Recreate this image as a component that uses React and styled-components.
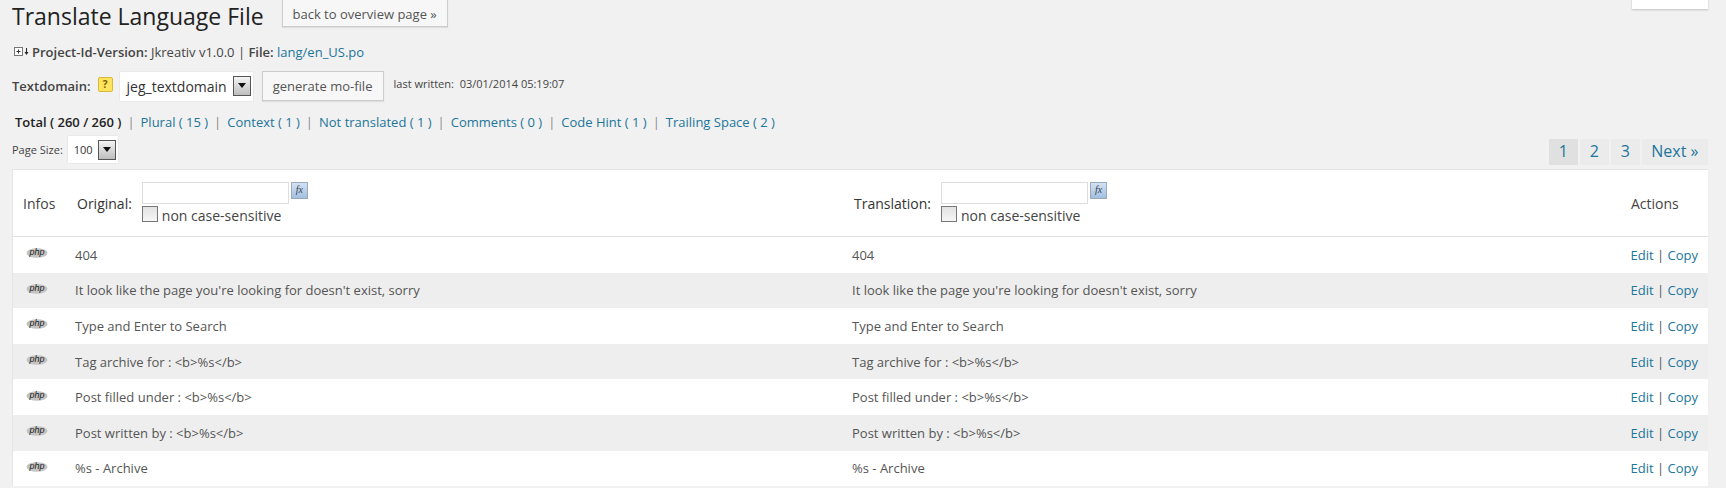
import styled, { createGlobalStyle } from "styled-components";

const GlobalStyle = createGlobalStyle`
	html, body {
		margin: 0;
		padding: 0;
		height: 488px;
		overflow: hidden;
		background: #f1f1f1;
		font-family: "Open Sans", sans-serif;
		font-size: 13px;
		color: #444;
	}
`;

const linkColor = "#21759b";

const rows = [
	"404",
	"It look like the page you're looking for doesn't exist, sorry",
	"Type and Enter to Search",
	"Tag archive for : <b>%s</b>",
	"Post filled under : <b>%s</b>",
	"Post written by : <b>%s</b>",
	"%s - Archive",
];

const filters = [
	"Plural ( 15 )",
	"Context ( 1 )",
	"Not translated ( 1 )",
	"Comments ( 0 )",
	"Code Hint ( 1 )",
	"Trailing Space ( 2 )",
];

export default function App() {
	return (
		<Page>
			<GlobalStyle />
			<ScreenTab />
			<TitleRow>
				<Title>Translate Language File</Title>
				<BackButton>back to overview page »</BackButton>
			</TitleRow>

			<ProjectRow>
				<ExpandIcon />
				<b>Project-Id-Version:</b>&nbsp;Jkreativ v1.0.0&nbsp;|&nbsp;<b>File:</b>&nbsp;
				<Link>lang/en_US.po</Link>
			</ProjectRow>

			<DomainRow>
				<b>Textdomain:</b>
				<HelpIcon>?</HelpIcon>
				<DomainSelect>
					jeg_textdomain
					<SelectArrow />
				</DomainSelect>
				<GenerateButton>generate mo-file</GenerateButton>
				<LastWritten>last written:&nbsp; 03/01/2014 05:19:07</LastWritten>
			</DomainRow>

			<FilterRow>
				<b>Total ( 260 / 260 )</b>
				{filters.map((label) => (
					<span key={label}>
						<Sep>|</Sep>
						<Link>{label}</Link>
					</span>
				))}
			</FilterRow>

			<PagerRow>
				<PageSize>
					Page Size:
					<SizeSelect>
						100
						<SelectArrow />
					</SizeSelect>
				</PageSize>
				<Pager>
					<PageLink $current>1</PageLink>
					<PageLink>2</PageLink>
					<PageLink>3</PageLink>
					<PageLink>Next »</PageLink>
				</Pager>
			</PagerRow>

			<TableBox>
				<HeadRow>
					<HeadLabel>Infos</HeadLabel>
					<SearchCell>
						<span>Original:</span>
						<SearchBox />
					</SearchCell>
					<SearchCell>
						<span>Translation:</span>
						<SearchBox />
					</SearchCell>
					<ActionsHead>Actions</ActionsHead>
				</HeadRow>
				{rows.map((text, i) => (
					<Row key={text} $odd={i % 2 === 1}>
						<InfoCell>
							<PhpIcon />
						</InfoCell>
						<TextCell>{text}</TextCell>
						<TextCell>{text}</TextCell>
						<ActionCell>
							<Link>Edit</Link> | <Link>Copy</Link>
						</ActionCell>
					</Row>
				))}
			</TableBox>
		</Page>
	);
}

function SearchBox() {
	return (
		<SearchStack>
			<SearchTop>
				<SearchInput />
				<FxButton>
					<i>fx</i>
				</FxButton>
			</SearchTop>
			<CaseLine>
				<CheckBox />
				non case-sensitive
			</CaseLine>
		</SearchStack>
	);
}

function ExpandIcon() {
	return (
		<ExpandSvg width="18" height="10" viewBox="0 0 18 10">
			<rect x="0.5" y="0.5" width="8" height="8" fill="#fff" stroke="#777" />
			<path d="M2.5 4.5h4M4.5 2.5v4" stroke="#333" />
			<path d="M12.5 1v4" stroke="#222" />
			<path d="M10.5 5h4l-2 3z" fill="#222" />
		</ExpandSvg>
	);
}

function PhpIcon() {
	return (
		<svg width="22" height="12" viewBox="0 0 22 12">
			<ellipse cx="11" cy="6" rx="10.5" ry="4.8" fill="#c4c4c4" />
			<text x="11" y="8" textAnchor="middle" fontFamily="Liberation Sans, sans-serif" fontSize="9" fontStyle="italic" fill="#222">
				php
			</text>
		</svg>
	);
}

const Page = styled.div`
	height: 488px;
	overflow: hidden;
	padding: 0 18px 0 12px;
	box-sizing: border-box;
	position: relative;
`;

const ScreenTab = styled.div`
	position: absolute;
	top: -1px;
	right: 18px;
	width: 76px;
	height: 10px;
	background: #fff;
	box-shadow: 0 1px 2px rgba(0, 0, 0, 0.2);
`;

const TitleRow = styled.div`
	display: flex;
	align-items: flex-start;
	height: 27px;
`;

const Title = styled.h2`
	margin: 0;
	font-size: 23px;
	line-height: 30px;
	font-weight: 400;
	color: #222;
	padding-top: 1px;
`;

const BackButton = styled.div`
	margin-left: 18px;
	width: 166px;
	height: 27px;
	flex: none;
	box-sizing: border-box;
	background: #f7f7f7;
	border: 1px solid #ccc;
	border-top: 0;
	box-shadow: 0 1px 1px rgba(0, 0, 0, 0.08);
	text-align: center;
	line-height: 28px;
	font-size: 13px;
	color: #555;
`;

const ProjectRow = styled.div`
	display: flex;
	align-items: center;
	margin: 0 0 0 2px;
	height: 20px;
	padding-top: 15px;
	white-space: pre;
	b {
		font-weight: 600;
	}
`;

const ExpandSvg = styled.svg`
	margin-right: 0;
`;

const Link = styled.span`
	color: ${linkColor};
`;

const DomainRow = styled.div`
	display: flex;
	align-items: center;
	height: 30px;
	margin-top: 9px;
	b {
		font-weight: 600;
	}
`;

const HelpIcon = styled.span`
	width: 13px;
	height: 13px;
	margin: -4px 0 0 7px;
	border: 1px solid #d9b93a;
	border-radius: 2px;
	background: #ffe45c;
	color: #7a5c00;
	font-size: 10px;
	font-weight: 700;
	line-height: 13px;
	text-align: center;
`;

const SelectBase = styled.div`
	display: flex;
	align-items: center;
	background: #fff;
	box-sizing: border-box;
	box-shadow: 0 0 1px rgba(0, 0, 0, 0.2);
`;

const DomainSelect = styled(SelectBase)`
	margin-left: 7px;
	flex: none;
	width: 133px;
	height: 29px;
	padding: 0 2px 0 7px;
	justify-content: space-between;
	font-size: 14px;
	color: #333;
`;

const SelectArrow = styled.span`
	flex: none;
	width: 18px;
	height: 20px;
	box-sizing: border-box;
	border: 1px solid #555;
	background: linear-gradient(#f4f4f4, #bdbdbd);
	position: relative;
	&::after {
		content: "";
		position: absolute;
		left: 4px;
		top: 6px;
		border: 4px solid transparent;
		border-top: 5px solid #111;
	}
`;

const GenerateButton = styled.div`
	margin-left: 9px;
	flex: none;
	width: 122px;
	height: 30px;
	box-sizing: border-box;
	background: #f7f7f7;
	border: 1px solid #ccc;
	box-shadow: 0 1px 1px rgba(0, 0, 0, 0.08);
	text-align: center;
	line-height: 28px;
	color: #555;
`;

const LastWritten = styled.span`
	margin: -6px 0 0 10px;
	font-size: 11px;
	color: #444;
`;

const FilterRow = styled.div`
	margin: 12px 0 0 3px;
	height: 18px;
	line-height: 18px;
	b {
		font-weight: 600;
		color: #222;
	}
`;

const Sep = styled.span`
	margin: 0 6px;
	color: #888;
`;

const PagerRow = styled.div`
	display: flex;
	justify-content: space-between;
	align-items: flex-start;
	height: 31px;
	margin-top: 7px;
`;

const PageSize = styled.div`
	display: flex;
	align-items: center;
	height: 27px;
	margin-top: -2px;
	font-size: 11px;
`;

const SizeSelect = styled(SelectBase)`
	margin-left: 5px;
	width: 50px;
	height: 27px;
	padding: 0 2px 0 6px;
	justify-content: space-between;
	font-size: 11px;
	color: #333;
`;

const Pager = styled.div`
	display: flex;
	gap: 2px;
	margin-top: 1px;
`;

const PageLink = styled.span`
	height: 26px;
	padding: 0 9.5px;
	min-width: 10px;
	line-height: 25px;
	font-size: 16px;
	text-align: center;
	color: ${linkColor};
	background: ${(p) => (p.$current ? "#e0e0e0" : "#ebebeb")};
`;

const TableBox = styled.div`
	background: #fff;
	border: 1px solid #e5e5e5;
	border-right: 0;
	border-bottom: 0;
`;

const gridCols = "grid-template-columns: 62px 777px 1fr 110px;";

const HeadRow = styled.div`
	display: grid;
	${gridCols}
	align-items: center;
	height: 66px;
	border-bottom: 1px solid #e1e1e1;
	font-size: 14px;
`;

const HeadLabel = styled.span`
	padding-left: 10px;
	color: #444;
`;

const SearchCell = styled.div`
	display: flex;
	align-items: center;
	color: #333;
	> span {
		margin: 0 10px 0 2px;
	}
`;

const SearchStack = styled.div`
	display: flex;
	flex-direction: column;
`;

const SearchTop = styled.div`
	display: flex;
	align-items: flex-start;
`;

const SearchInput = styled.div`
	width: 145px;
	height: 20px;
	background: #fff;
	border: 1px solid #ddd;
`;

const FxButton = styled.span`
	width: 15px;
	height: 15px;
	margin-left: 2px;
	background: linear-gradient(#d3e2f3, #a3bfe0);
	border: 1px solid #9ab;
	font-family: "Liberation Serif", serif;
	font-size: 10px;
	line-height: 13px;
	text-align: center;
	color: #345;
`;

const CaseLine = styled.div`
	display: flex;
	align-items: flex-end;
	margin-top: 2px;
	height: 18px;
	line-height: 17px;
	color: #444;
`;

const CheckBox = styled.span`
	width: 14px;
	height: 14px;
	margin: 0 4px 2px 0;
	border: 1px solid #777;
	background: linear-gradient(#e2e2e2, #f6f6f6);
`;

const ActionsHead = styled.span`
	color: #444;
	padding-left: 33px;
`;

const Row = styled.div`
	display: grid;
	${gridCols}
	align-items: center;
	height: 35.6px;
	background: ${(p) => (p.$odd ? "#eeeeee" : "#fff")};
`;

const InfoCell = styled.div`
	display: flex;
	padding: 0 0 3px 13px;
`;

const TextCell = styled.div`
	color: #555;
`;

const ActionCell = styled.div`
	text-align: right;
	padding-right: 10px;
	color: #555;
`;
